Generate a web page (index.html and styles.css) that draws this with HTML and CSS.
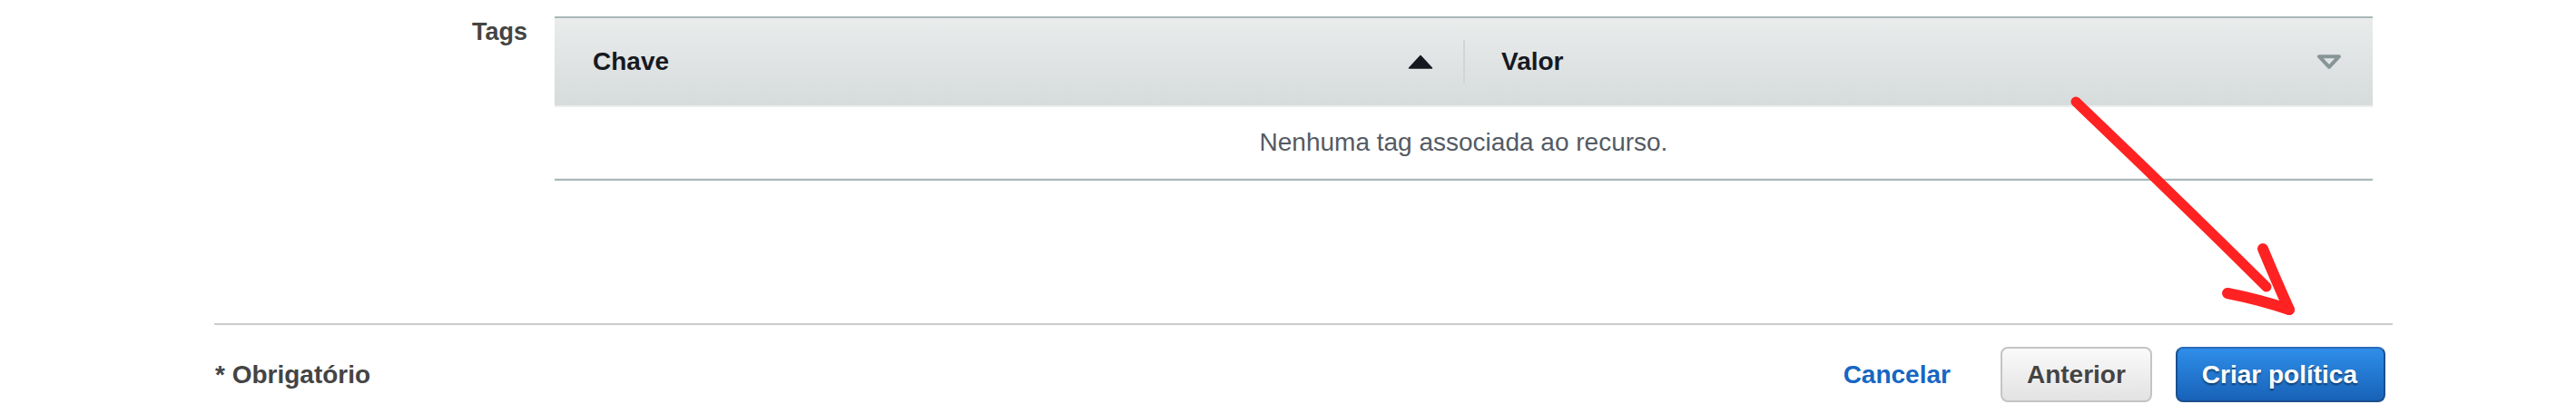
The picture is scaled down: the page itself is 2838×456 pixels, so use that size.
FILE: index.html
```html
<!DOCTYPE html>
<html lang="pt">
<head>
<meta charset="utf-8">
<title>Tags</title>
<link rel="stylesheet" href="styles.css">
</head>
<body>
<div class="page">
  <div class="tags-row">
    <div class="label">Tags</div>
    <div class="table">
      <div class="thead">
        <div class="col col-key">
          <span>Chave</span>
          <svg class="sort-icon" width="28" height="16" viewBox="0 0 28 16"><path d="M14 1.5 L26.5 15 L1.5 15 Z" fill="#16191f" stroke="#16191f" stroke-width="1.5" stroke-linejoin="round"/></svg>
        </div>
        <div class="sep"></div>
        <div class="col col-val">
          <span>Valor</span>
          <svg class="sort-icon" width="28" height="16" viewBox="0 0 28 16"><path d="M3 2.2 L25 2.2 L14 13.8 Z" fill="none" stroke="#879596" stroke-width="4" stroke-linejoin="round"/></svg>
        </div>
      </div>
      <div class="empty-row">Nenhuma tag associada ao recurso.</div>
    </div>
  </div>
  <div class="footer">
    <div class="required">* Obrigatório</div>
    <div class="actions">
      <a class="cancel" href="#">Cancelar</a>
      <button class="btn btn-secondary" type="button">Anterior</button>
      <button class="btn btn-primary" type="button">Criar política</button>
    </div>
  </div>
</div>
<svg class="annotation" width="2838" height="456" viewBox="0 0 2838 456">
  <g fill="none" stroke="#ff2222" stroke-linecap="round" stroke-linejoin="round">
    <path d="M2287 112 Q2392 212 2497 316" stroke-width="11"/>
    <path d="M2493 274 Q2506 305 2522 341" stroke-width="12"/>
    <path d="M2454 323 Q2490 330 2522 341" stroke-width="12"/>
  </g>
</svg>
</body>
</html>
```
FILE: styles.css
```css
html, body {
  margin: 0;
  padding: 0;
  background: #ffffff;
}
body {
  font-family: "Liberation Sans", Arial, Helvetica, sans-serif;
  width: 2838px;
  height: 456px;
  overflow: hidden;
  position: relative;
}
.page {
  margin-left: 236px;
  width: 2400px;
}
.tags-row {
  display: grid;
  grid-template-columns: 345px 2003px;
  column-gap: 30px;
  padding-top: 18px;
}
.label {
  text-align: right;
  font-weight: bold;
  font-size: 27px;
  line-height: 32px;
  padding-top: 1px;
  color: #444444;
}
.table {
  border-top: 2px solid #aab7b8;
  border-bottom: 2px solid #aab7b8;
}
.thead {
  display: flex;
  align-items: center;
  height: 96px;
  background: linear-gradient(#eaecec, #d6dbdb);
  border-bottom: 2px solid #eaeded;
}
.col {
  flex: 1;
  display: flex;
  align-items: center;
  justify-content: space-between;
  font-weight: bold;
  font-size: 28px;
  color: #16191f;
}
.col-key {
  padding: 0 33px 0 42px;
}
.col-val {
  padding: 0 34px 0 40px;
}
.sort-icon {
  display: block;
  flex: none;
}
.sep {
  width: 2px;
  height: 48px;
  background: #d0d5d5;
  flex: none;
}
.empty-row {
  height: 78px;
  display: flex;
  align-items: center;
  justify-content: center;
  font-size: 28px;
  color: #545b64;
  border-bottom: 1px solid #eaeded;
}
.footer {
  margin-top: 157px;
  border-top: 2px solid #cccccc;
  padding: 24px 8px 0 1px;
  display: flex;
  align-items: center;
  justify-content: space-between;
}
.required {
  font-weight: bold;
  font-size: 28px;
  color: #444444;
}
.actions {
  display: flex;
  align-items: center;
}
.cancel {
  font-weight: bold;
  font-size: 28px;
  color: #1766c3;
  text-decoration: none;
  margin-right: 55px;
}
.btn {
  box-sizing: border-box;
  height: 61px;
  padding: 0 27px;
  border-radius: 8px;
  font-family: "Liberation Sans", Arial, Helvetica, sans-serif;
  font-weight: bold;
  font-size: 28px;
  display: inline-flex;
  align-items: center;
  cursor: pointer;
}
.btn-secondary {
  border: 2px solid #c4c4c4;
  background: linear-gradient(#fafafa, #e2e2e2);
  color: #444444;
  text-shadow: 0 1px 0 #ffffff;
  margin-right: 26px;
}
.btn-primary {
  border: 2px solid #1a4f8e;
  border-top-color: #2a6bb8;
  background: linear-gradient(#2e8ee9, #1862b8);
  color: #ffffff;
  text-shadow: 0 2px 2px rgba(0, 0, 0, 0.45);
  padding-right: 29px;
}
.annotation {
  position: absolute;
  left: 0;
  top: 0;
  pointer-events: none;
}
```
